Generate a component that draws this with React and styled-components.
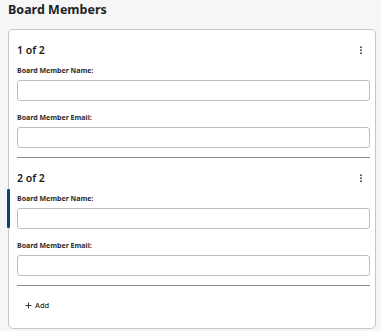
import React from 'react';
import styled, { createGlobalStyle } from 'styled-components';

const GlobalStyle = createGlobalStyle`
  html, body {
    margin: 0;
    padding: 0;
    background: #f6f6f6;
  }
  body {
    font-family: "Noto Sans", "Open Sans", sans-serif;
    color: #1d1d1d;
  }
`;

const Page = styled.div`
  padding: 2px 5px 0 8px;
  width: 368px;
`;

const Title = styled.h2`
  margin: 0 0 11px;
  font-size: 12.5px;
  line-height: 16px;
  font-weight: 700;
  color: #1f1f1f;
`;

const Card = styled.div`
  position: relative;
  background: #fff;
  border: 1px solid #c6c6c6;
  border-radius: 5px;
  padding: 0 5px 0 8px;
`;

const Member = styled.section`
  position: relative;
  padding: 13px 0 9px;
  border-bottom: 1px solid #8c8c8c;
  display: flex;
  flex-direction: column;
`;

const Header = styled.div`
  display: flex;
  align-items: center;
  justify-content: space-between;
  height: 14px;
  margin-bottom: 8.5px;
`;

const Heading = styled.h3`
  margin: 0;
  font-size: 10.5px;
  line-height: 14px;
  font-weight: 600;
  color: #1a1a1a;
`;

const MenuButton = styled.button`
  display: flex;
  align-items: center;
  justify-content: center;
  width: 14px;
  height: 14px;
  margin-right: 2px;
  padding: 0;
  border: 0;
  background: none;
  color: #4a4238;
`;

const Fields = styled.div`
  display: flex;
  flex-direction: column;
  gap: 12.5px;
`;

const Field = styled.label`
  display: flex;
  flex-direction: column;
  gap: 4px;
`;

const Label = styled.span`
  font-size: 7px;
  line-height: 10px;
  font-weight: 700;
  color: #2b2b2b;
`;

const Input = styled.input`
  box-sizing: border-box;
  height: 21px;
  width: 100%;
  border: 1px solid #bdbdbd;
  border-radius: 3px;
  background: #fff;
  font: inherit;
  font-size: 8px;
  padding: 0 6px;
  outline: none;
`;

const ActiveBar = styled.span`
  position: absolute;
  left: -10px;
  top: 31px;
  width: 3px;
  height: 39px;
  background: #0c4670;
  border-radius: 1px;
`;

const AddRow = styled.div`
  padding: 7px 0 11px;
`;

const AddButton = styled.button`
  display: flex;
  align-items: center;
  gap: 3px;
  height: 24px;
  padding: 0 8px;
  border: 0;
  background: none;
  font-family: inherit;
  font-size: 7.5px;
  font-weight: 500;
  color: #1f1f1f;
`;

const Kebab = () => (
  <svg width="4" height="9" viewBox="0 0 4 9">
    <circle cx="2" cy="1.2" r="0.95" fill="currentColor" />
    <circle cx="2" cy="4.2" r="0.95" fill="currentColor" />
    <circle cx="2" cy="7.2" r="0.95" fill="currentColor" />
  </svg>
);

const Plus = () => (
  <svg width="7" height="7" viewBox="0 0 7 7">
    <path d="M3.5 0.5v6M0.5 3.5h6" stroke="#222" strokeWidth="0.9" />
  </svg>
);

const members = [
  { id: 1, active: false },
  { id: 2, active: true },
];

export default function App() {
  return (
    <>
      <GlobalStyle />
      <Page>
        <Title>Board Members</Title>
        <Card>
          {members.map((m) => (
            <Member key={m.id}>
              {m.active && <ActiveBar />}
              <Header>
                <Heading>
                  {m.id} of {members.length}
                </Heading>
                <MenuButton aria-label="More">
                  <Kebab />
                </MenuButton>
              </Header>
              <Fields>
                <Field>
                  <Label>Board Member Name:</Label>
                  <Input type="text" />
                </Field>
                <Field>
                  <Label>Board Member Email:</Label>
                  <Input type="email" />
                </Field>
              </Fields>
            </Member>
          ))}
          <AddRow>
            <AddButton>
              <Plus />
              Add
            </AddButton>
          </AddRow>
        </Card>
      </Page>
    </>
  );
}
